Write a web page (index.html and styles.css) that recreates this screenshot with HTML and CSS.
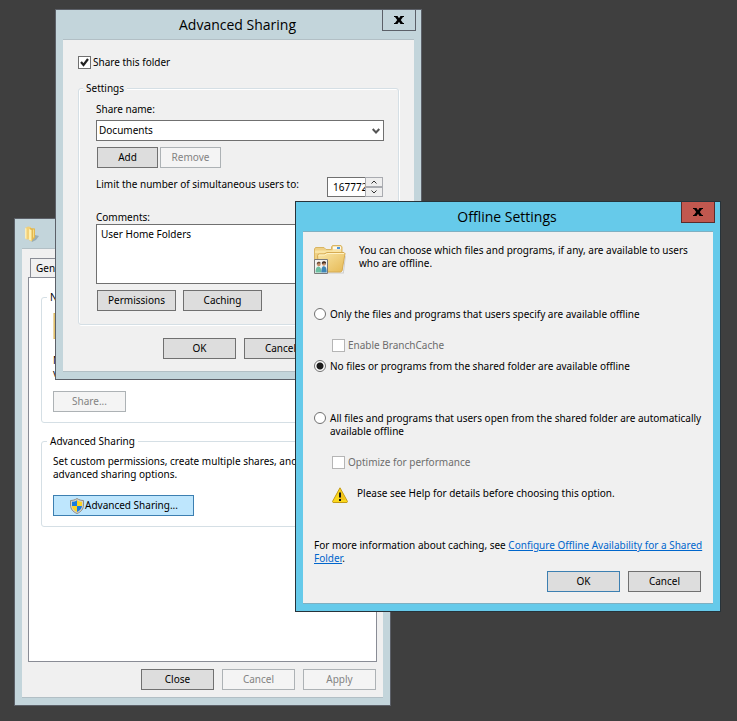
FILE: index.html
```
<!DOCTYPE html>
<html lang="en">
<head>
<meta charset="utf-8">
<title>Offline Settings</title>
<link rel="stylesheet" href="styles.css">
</head>
<body>
<main class="desktop">

<section class="window properties" aria-label="Folder properties">
  <header class="titlebar">
    <svg class="title-icon" viewBox="0 0 16 16" aria-hidden="true">
      <path d="M8 12l3-3 4 1-3 4-4 2z" fill="#8fa3ab" opacity=".8"/>
      <path d="M1 2l3-1.500 3 .5v12l-4 .5-2-1z" fill="#f1d078"/>
      <path d="M1 2l1.500.5v10.500L1 12.500z" fill="#fbeeb9"/>
      <path d="M6 2l5 .5V12l-1.500 1-2 2.500L5 14z" fill="#e3b84f"/>
      <path d="M5 3l2.500 1v11L5 14z" fill="#fff0ae"/>
      <path d="M9.500 3.500v8" stroke="#f6dc88" fill="none"/>
    </svg>
  </header>
  <div class="client">
    <div class="tabs"><button type="button" class="tab">General</button></div>
    <div class="pane">
      <fieldset class="group network">
        <legend>Network</legend>
        <svg class="side-folder" viewBox="0 0 32 26" aria-hidden="true"><path d="M1 0h14l3 3h13v23H1z" fill="#f3d98f" stroke="#d6ae4c"/></svg>
        <p>Network Path:<br>v</p>
        <button type="button" class="btn share" disabled>Share...</button>
      </fieldset>
      <fieldset class="group advanced">
        <legend>Advanced Sharing</legend>
        <p>Set custom permissions, create multiple shares, and<br>advanced sharing options.</p>
        <button type="button" class="btn hot">
          <svg class="shield" viewBox="0 0 16 16" aria-hidden="true">
            <path d="M8 .5C10 2 12.500 2.500 14.500 2.500V7c0 4-2.500 7-6.500 8.500C4 14 1.500 11 1.500 7V2.500C3.500 2.500 6 2 8 .5z" fill="#d5d2c8" stroke="#8f8c84"/>
            <path d="M8 2.200V8H3V3.800C5 3.700 6.700 3.200 8 2.200z" fill="#1a7be0"/>
            <path d="M8 2.200V8h5V3.800C11 3.700 9.300 3.200 8 2.200z" fill="#ffd421"/>
            <path d="M3 8h5v6C5.300 12.800 3.400 10.600 3 8z" fill="#ffd421"/>
            <path d="M13 8H8v6c2.700-1.200 4.600-3.400 5-6z" fill="#1a7be0"/>
          </svg>Advanced Sharing...
        </button>
      </fieldset>
    </div>
    <div class="actions">
      <button type="button" class="btn">Close</button>
      <button type="button" class="btn" disabled>Cancel</button>
      <button type="button" class="btn" disabled>Apply</button>
    </div>
  </div>
</section>

<section class="window sharing" aria-labelledby="sharing-title">
  <header class="titlebar">
    <h1 id="sharing-title">Advanced Sharing</h1>
    <button type="button" class="close" aria-label="Close">
      <svg viewBox="0 0 10 8" aria-hidden="true"><path d="M0 0h3.500L5 2.300 6.500 0H10v1H9L6.800 4 9 7h1v1H6.500L5 5.700 3.500 8H0V7h1l2.200-3L1 1H0z"/></svg>
    </button>
  </header>
  <div class="client">
    <label class="check share-check"><input type="checkbox" checked>Share this folder</label>
    <fieldset class="group settings">
      <legend>Settings</legend>
      <label for="share-name">Share name:</label>
      <div class="combo">
        <select id="share-name"><option>Documents</option></select>
        <svg viewBox="0 0 8 6" aria-hidden="true"><path d="M.7 1L4 4.500 7.300 1"/></svg>
      </div>
      <div class="row tight">
        <button type="button" class="btn small">Add</button>
        <button type="button" class="btn small" disabled>Remove</button>
      </div>
      <div class="limit">
        <label for="limit">Limit the number of simultaneous users to:</label>
        <div class="spinner">
          <input id="limit" type="text" value="16777216">
          <div class="steps">
            <button type="button" aria-label="More"><svg viewBox="0 0 6 4" aria-hidden="true"><path d="M.5 3.500L3 1l2.500 2.500"/></svg></button>
            <button type="button" aria-label="Fewer"><svg viewBox="0 0 6 4" aria-hidden="true"><path d="M.5.5L3 3 5.500.5"/></svg></button>
          </div>
        </div>
      </div>
      <label for="comments">Comments:</label>
      <textarea id="comments">User Home Folders</textarea>
      <div class="row">
        <button type="button" class="btn medium">Permissions</button>
        <button type="button" class="btn medium">Caching</button>
      </div>
    </fieldset>
    <div class="actions">
      <button type="button" class="btn">OK</button>
      <button type="button" class="btn">Cancel</button>
    </div>
  </div>
</section>

<section class="window offline" aria-labelledby="offline-title">
  <header class="titlebar">
    <h1 id="offline-title">Offline Settings</h1>
    <button type="button" class="close" aria-label="Close">
      <svg viewBox="0 0 10 8" aria-hidden="true"><path d="M0 0h3.500L5 2.300 6.500 0H10v1H9L6.800 4 9 7h1v1H6.500L5 5.700 3.500 8H0V7h1l2.200-3L1 1H0z"/></svg>
    </button>
  </header>
  <div class="client">
    <div class="intro">
      <svg class="folder-icon" viewBox="0 0 32 32" aria-hidden="true">
        <defs>
          <linearGradient id="front" x1="0" y1="0" x2="1" y2="1"><stop offset="0" stop-color="#fae7a8"/><stop offset="1" stop-color="#e6b954"/></linearGradient>
        </defs>
        <path d="M12 28.500h17l2-17 .8 1-2 17H12z" fill="#999" opacity=".4"/>
        <path d="M.5 5l1-1.500h8.500L12 5.500h5.500V3l1-1.500H27L28 3v23H.5z" fill="#efd085" stroke="#d9b562"/>
        <path d="M19 2.500h8v3h-8z" fill="#fdfbee"/><path d="M23 3h3v2h-3z" fill="#4b93dc"/>
        <path d="M1 6.500h17l1-.5h8v3H1z" fill="#f9e4a4"/>
        <path d="M3.500 11.500l1-1.500H10l3-1.500h17l1 1-3 17.500-1.500 1H5z" fill="url(#front)" stroke="#d6ab52"/>
        <path d="M5 11h5.500l3-1.500H30" fill="none" stroke="#fff2c5"/>
        <path d="M.5 15.500h13v14H.5z" fill="#f3f3f1" stroke="#7a7a7a"/>
        <circle cx="4.800" cy="20.500" r="1.800" fill="#c58d68"/><circle cx="9.800" cy="20" r="1.800" fill="#c58d68"/>
        <path d="M2.700 20.500l.3-2 2-1 1.800 1.200-.3.800-2-.3z" fill="#6b4a35"/><path d="M7.800 20l.2-2 2-1 2 1v3l-.8-2z" fill="#4b3528"/>
        <path d="M1.500 28.500c0-4 1-6 3-6s2.800 2 2.800 6z" fill="#6cbfa2"/>
        <path d="M7.300 28.500c0-4.500.8-6.300 2.700-6.300s2.700 2 2.700 6.300z" fill="#3f86b5"/>
      </svg>
      <p>You can choose which files and programs, if any, are available to users<br>who are offline.</p>
    </div>
    <label class="radio first"><input type="radio" name="offline">Only the files and programs that users specify are available offline</label>
    <label class="check nested branch"><input type="checkbox" disabled>Enable BranchCache</label>
    <label class="radio second"><input type="radio" name="offline" checked>No files or programs from the shared folder are available offline</label>
    <label class="radio third"><input type="radio" name="offline"><span>All files and programs that users open from the shared folder are automatically<br>available offline</span></label>
    <label class="check nested optimize"><input type="checkbox" disabled>Optimize for performance</label>
    <div class="warning">
      <svg viewBox="0 0 16 16" aria-hidden="true">
        <path d="M8 .8L15.500 14.500l-.5 1H1l-.5-1z" fill="#fbd81c" stroke="#c39a16" stroke-linejoin="round"/>
        <path d="M8 2.500L13.500 13H8z" fill="#f2c318"/>
        <path d="M7 5.500h2v5H7zM7 12h2v2H7z" fill="#171717"/>
      </svg>
      <p>Please see Help for details before choosing this option.</p>
    </div>
    <p class="more">For more information about caching, see <a href="#">Configure Offline Availability for a Shared<br>Folder</a>.</p>
    <div class="actions">
      <button type="button" class="btn default">OK</button>
      <button type="button" class="btn">Cancel</button>
    </div>
  </div>
</section>

</main>
</body>
</html>
```
FILE: styles.css
```
* { box-sizing: border-box; }

body {
  margin: 0;
  background: #3f3f3f;
  color: #000;
  font: 10px/13px "Noto Sans", "Open Sans", sans-serif;
}

button, input, select, textarea { font: inherit; color: inherit; margin: 0; }
p, h1 { margin: 0; font: inherit; }
svg { display: block; flex: none; }

.desktop { position: relative; min-height: 100vh; overflow: hidden; }

/* Windows */
.window {
  position: absolute;
  background: #c3d5db;
  border: 1px solid #5c6068;
  padding: 0 7px 7px;
  white-space: nowrap;
}
.properties { left: 14px; top: 218px; width: 377px; }
.sharing { left: 55px; top: 9px; width: 367px; }
.offline { left: 295px; top: 201px; width: 426px; background: #66caea; border-color: #27333a; }

.titlebar { position: relative; height: 29px; display: flex; align-items: center; justify-content: center; padding-right: 2px; }
.titlebar h1 { font: 14px/20px "Open Sans", "Noto Sans", sans-serif; }
.title-icon { width: 16px; height: 16px; margin: 0 auto 0 2px; }
.close {
  position: absolute;
  top: 0;
  right: -2px;
  width: 34px;
  height: 21px;
  padding: 0;
  display: grid;
  place-items: center;
  background: #c3d5db;
  border: 1px solid #5c6068;
  border-top: 0;
}
.close svg { width: 10px; height: 8px; }
.offline .close { background: #c1584f; border-color: #5a2c2c; }

.client { background: #f0f0f0; border-top: 1px solid #b2bfc5; border-bottom: 1px solid #b2bfc5; }
.offline .client { border-color: #7fb0c2; padding: 0 12px 11px 11px; }
.sharing .client { padding: 16px 15px 12px; }
.properties .client { padding: 9px 6px 7px; }

/* Buttons */
.btn {
  width: 73px;
  height: 21px;
  padding: 0;
  background: #dddddd;
  border: 1px solid #707070;
  border-radius: 0;
  text-align: center;
}
.btn:disabled { background: #f4f4f4; border-color: #adb2b5; color: #838383; }
.btn.small { width: 61px; }
.btn.medium { width: 79px; }
.btn.default { border-color: #3c7fb1; }
.btn.hot {
  width: 141px;
  display: flex;
  align-items: center;
  justify-content: center;
  background: #bee6fd;
  border-color: #3c7fb1;
}
.shield { width: 16px; height: 16px; }
.row { display: flex; gap: 7px; padding-left: 1px; }
.row.tight { gap: 2px; }
.actions { display: flex; justify-content: flex-end; gap: 8px; }

/* Group boxes */
.group { margin: 0; min-width: 0; border: 1px solid #d5dfe5; border-radius: 3px; padding: 0 11px; }
.group legend { padding: 0 3px; margin-left: -6px; line-height: 14px; }
.group label { display: block; }

/* Check boxes and radio buttons */
.check, .radio { display: flex; gap: 2px; }
.radio { gap: 4px; }
.check input, .radio input {
  appearance: none;
  flex: none;
  width: 13px;
  height: 13px;
  background: #fff;
  border: 1px solid #707070;
}
.radio input { width: 12px; height: 12px; border-radius: 50%; }
.check input:checked { background: #fff url("data:image/svg+xml,%3Csvg xmlns='http://www.w3.org/2000/svg' viewBox='0 0 11 11'%3E%3Cpath d='M2 5l2.500 3L9 2' fill='none' stroke='%23222' stroke-width='2.200'/%3E%3C/svg%3E") center / 11px 11px; }
.radio input:checked { background: radial-gradient(circle, #1c1c1c 3px, #fff 4px); }
.check input:disabled { border-color: #b5b5b5; }
.check:has(input:disabled) { color: #6d6d6d; }

/* Properties window */
.tab {
  display: block;
  width: 54px;
  height: 19px;
  margin-left: 2px;
  padding: 0 5px;
  text-align: left;
  background: #f0f0f0;
  border: 1px solid #898c95;
  border-bottom: 0;
}
.pane { background: #fff; border: 1px solid #898c95; padding: 12px 12px 134px; margin-bottom: 7px; }
.network { padding-bottom: 10px; }
.side-folder { width: 32px; height: 26px; margin: 9px 0 15px; }
.share { margin-top: 11px; }
.advanced { margin-top: 11px; padding-bottom: 10px; }
.advanced p { margin: 7px 0 14px; }
.properties .actions { padding-right: 1px; }

/* Advanced sharing window */
.settings { margin: 12px 0 13px; padding: 0 14px 13px 17px; box-shadow: inset 1px 1px #fff, 1px 1px #fff; }
.settings legend { margin-left: -13px; background: #f0f0f0; }
.settings > label:first-of-type { margin-top: 8px; }
.combo { position: relative; margin: 4px 0 6px; }
.combo select { appearance: none; display: block; width: 100%; height: 21px; padding: 0 2px; background: #fff; border: 1px solid #707070; border-radius: 0; }
.combo svg { position: absolute; right: 4px; top: 8px; width: 8px; height: 6px; fill: none; stroke: #555; stroke-width: 2; pointer-events: none; }
.limit { display: flex; justify-content: space-between; margin: 9px 1px 14px 0; }
.limit label { margin-top: 1px; }
.spinner { display: flex; width: 56px; height: 20px; }
.spinner input { width: 38px; min-width: 0; padding: 0 0 0 5px; background: #fff; border: 1px solid #707070; border-right: 0; border-radius: 0; }
.steps { flex: 1; display: grid; grid-template-rows: 1fr 1fr; }
.steps button { display: grid; place-items: center; min-height: 0; padding: 0; background: #eee; border: 1px solid #a9abb0; }
.steps svg { width: 6px; height: 4px; fill: none; stroke: #333; }
textarea { display: block; width: 100%; height: 60px; margin-bottom: 6px; padding: 3px 4px; background: #fff; border: 1px solid #707070; border-radius: 0; resize: none; }
.sharing .actions { padding-right: 82px; }

/* Offline settings window */
.intro { display: flex; gap: 13px; padding-top: 12px; }
.folder-icon { width: 32px; height: 32px; }
.first { margin-top: 32px; }
.nested { margin-left: 18px; gap: 3px; }
.branch { margin-top: 18px; }
.second { margin-top: 8px; }
.third { margin-top: 39px; }
.optimize { margin-top: 18px; }
.warning { display: flex; gap: 9px; margin: 18px 0 36px 18px; }
.warning svg { width: 16px; height: 16px; }
.more { margin-bottom: 6px; }
.more a { color: #0066cc; }
```
